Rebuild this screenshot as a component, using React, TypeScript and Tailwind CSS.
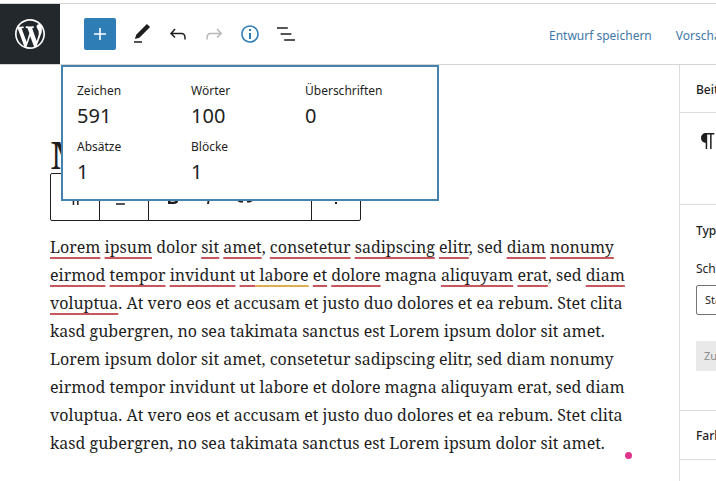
import type { ReactNode } from "react";

const icons = {
  logo: "M20 10c0-5.51-4.49-10-10-10C4.48 0 0 4.49 0 10c0 5.52 4.48 10 10 10 5.51 0 10-4.48 10-10zM7.78 15.37L4.37 6.22c.55-.02 1.17-.08 1.17-.08.5-.06.44-1.13-.06-1.11 0 0-1.45.11-2.37.11-.18 0-.37 0-.58-.01C4.12 2.69 6.87 1.11 10 1.11c2.33 0 4.45.87 6.05 2.34-.68-.11-1.65.39-1.65 1.58 0 .74.45 1.36.9 2.1.35.61.55 1.36.55 2.46 0 1.49-1.4 5-1.4 5l-3.03-8.37c.54-.02.82-.17.82-.17.5-.05.44-1.25-.06-1.22 0 0-1.44.12-2.38.12-.87 0-2.33-.12-2.33-.12-.5-.03-.56 1.2-.06 1.22l.92.08 1.26 3.41zM17.41 10c.24-.64.74-1.87.43-4.25.7 1.29 1.05 2.71 1.05 4.25 0 3.29-1.73 6.24-4.4 7.78.97-2.59 1.94-5.2 2.92-7.78zM6.1 18.09C3.12 16.65 1.11 13.53 1.11 10c0-1.3.23-2.48.72-3.59C3.25 10.3 4.67 14.2 6.1 18.09zm4.03-6.63l2.58 6.98c-.86.29-1.76.45-2.71.45-.79 0-1.57-.11-2.29-.33.81-2.38 1.62-4.74 2.42-7.1z",
  plus: "M18 11.2h-5.2V6h-1.6v5.2H6v1.6h5.2V18h1.6v-5.2H18z",
  edit: "M20.1 5.1L16.9 2 6.2 12.7l-1.3 4.4 4.5-1.3L20.1 5.1zM4 20.8h8v-1.5H4v1.5z",
  undo: "M18.3 11.7c-.6-.6-1.4-.9-2.3-.9H6.7l2.9-3.3-1.1-1-4.5 5L8.5 16l1-1-2.7-2.7H16c.5 0 .9.2 1.3.5 1 1 1 3.4 1 4.5v.3h1.5v-.2c0-1.5 0-4.3-1.5-5.7z",
  redo: "M15.6 6.5l-1.1 1 2.9 3.3H8c-.9 0-1.7.3-2.3.9-1.4 1.5-1.4 4.2-1.4 5.6v.2h1.5v-.3c0-1.1 0-3.5 1-4.5.3-.3.7-.5 1.3-.5h9.2L14.5 15l1.1 1.1 4.6-4.6-4.6-5z",
  info: "M12 3.2c-4.8 0-8.8 3.9-8.8 8.8 0 4.8 3.9 8.8 8.8 8.8 4.8 0 8.8-3.9 8.8-8.8 0-4.8-4-8.8-8.8-8.8zm0 16c-4 0-7.2-3.3-7.2-7.2C4.8 8 8 4.8 12 4.8s7.2 3.3 7.2 7.2c0 4-3.2 7.2-7.2 7.2zM11 17h2v-6h-2v6zm0-8h2V7h-2v2z",
  outline: "M13.8 5.2H3v1.5h10.8V5.2zm-3.6 12v1.5H21v-1.5H10.2zm7.2-6H6.6v1.5h10.8v-1.5z",
  paragraph: "M18.3 4H9.9v-.1l-.9.2c-2.3.4-4 2.4-4 4.8s1.7 4.4 4 4.8l.7.1V20h1.5V5.5h2.9V20h1.5V5.5h2.7V4z",
  align: "M4 19.8h8.9v-1.5H4v1.5zm8.9-15.6H4v1.5h8.9V4.2zm-8.9 7v1.5h16v-1.5H4z",
  bold: "M14.7 11.3c1-.6 1.5-1.6 1.5-3 0-2.3-1.3-3.4-4-3.4H7v14h5.8c1.4 0 2.5-.3 3.3-1 .8-.7 1.2-1.7 1.2-2.9.1-1.9-.8-3.1-2.6-3.7zm-5.1-4h2.3c.6 0 1.1.1 1.4.4.3.3.5.7.5 1.2s-.2 1-.5 1.2c-.3.3-.8.4-1.4.4H9.6V7.3zm4.6 9c-.4.3-1 .4-1.7.4H9.6v-3.9h2.9c.7 0 1.3.2 1.7.5.4.3.6.8.6 1.5s-.2 1.2-.6 1.5z",
  italic: "M12.5 5L10 19h1.9l2.5-14z",
  link: "M15.6 7.2H14v1.5h1.6c2 0 3.7 1.7 3.7 3.7s-1.7 3.7-3.7 3.7H14v1.5h1.6c2.8 0 5.2-2.3 5.2-5.2 0-2.9-2.3-5.2-5.2-5.2zM4.7 12.4c0-2 1.7-3.7 3.7-3.7H10V7.2H8.4c-2.9 0-5.2 2.3-5.2 5.2 0 2.9 2.3 5.2 5.2 5.2H10v-1.5H8.4c-2 0-3.7-1.7-3.7-3.7zm4.6.9h5.3v-1.5H9.3v1.5z",
  more: "M13 19h-2v-2h2v2zm0-6h-2v-2h2v2zm0-6h-2V5h2v2z",
};

function Icon({ name }: { name: keyof typeof icons }) {
  return (
    <svg viewBox="0 0 24 24" className="size-6 shrink-0 fill-current" aria-hidden="true">
      <path d={icons[name]} />
    </svg>
  );
}

function IconButton({ name, label, className = "" }: { name: keyof typeof icons; label: string; className?: string }) {
  return (
    <button type="button" aria-label={label} className={`flex h-9 w-9 shrink-0 items-center justify-center ${className}`}>
      <Icon name={name} />
    </button>
  );
}

function Spell({ children }: { children: ReactNode }) {
  return (
    <span className="underline decoration-[#c8565c] decoration-2 underline-offset-4 [text-decoration-skip-ink:none]">
      {children}
    </span>
  );
}

function Hint({ children }: { children: ReactNode }) {
  return (
    <span className="underline decoration-[#e0ad52] decoration-2 underline-offset-4 [text-decoration-skip-ink:none]">
      {children}
    </span>
  );
}

const stats = [
  ["Zeichen", "591"],
  ["Wörter", "100"],
  ["Überschriften", "0"],
  ["Absätze", "1"],
  ["Blöcke", "1"],
];

function StatsPopover() {
  return (
    <dl className="absolute top-[65px] left-[61px] grid w-[378px] grid-cols-[114px_114px_114px] gap-y-1 border-2 border-[#4682ae] bg-white px-3.5 pt-3.5 pb-2.5">
      {stats.map(([label, value]) => (
        <div key={label} className="h-[52px]">
          <dt className="text-[12px] leading-5">{label}</dt>
          <dd className="text-[20px] leading-[30px]">{value}</dd>
        </div>
      ))}
    </dl>
  );
}

function Header() {
  return (
    <header className="mt-[3px] flex h-[62px] items-center border-y border-[#d5d5d8] bg-white">
      <a href="#" aria-label="WordPress" className="flex size-[60px] shrink-0 items-center justify-center bg-[#23282d] text-white">
        <svg viewBox="-2 -2 24 24" className="size-9 fill-current" aria-hidden="true">
          <path d={icons.logo} />
        </svg>
      </a>
      <button type="button" aria-label="Block hinzufügen" className="mr-2 ml-6 flex size-8 shrink-0 items-center justify-center rounded-xs bg-[#2f7db5] text-white">
        <Icon name="plus" />
      </button>
      <IconButton name="edit" label="Werkzeuge" />
      <IconButton name="undo" label="Rückgängig" />
      <IconButton name="redo" label="Wiederholen" className="text-[#b8b8b8]" />
      <IconButton name="info" label="Details" className="text-[#2f7db5]" />
      <IconButton name="outline" label="Gliederung" />
      <div className="ml-auto flex w-[167px] shrink-0 gap-6 overflow-hidden pt-1 text-[12px] whitespace-nowrap text-[#4078a8]">
        <button type="button">Entwurf speichern</button>
        <button type="button">Vorschau</button>
      </div>
    </header>
  );
}

function BlockToolbar() {
  return (
    <div className="flex h-12 w-[311px] rounded-xs border border-[#1e1e1e] bg-white">
      <div className="flex w-[49px] items-center justify-center border-r border-[#1e1e1e]">
        <IconButton name="paragraph" label="Absatz" />
      </div>
      <div className="flex w-[49px] items-center justify-center border-r border-[#1e1e1e]">
        <IconButton name="align" label="Ausrichtung" />
      </div>
      <div className="flex flex-1 items-center border-r border-[#1e1e1e] pl-1.5">
        <IconButton name="bold" label="Fett" />
        <IconButton name="italic" label="Kursiv" />
        <IconButton name="link" label="Link" />
      </div>
      <div className="flex w-[48px] items-center justify-center">
        <IconButton name="more" label="Optionen" />
      </div>
    </div>
  );
}

function Editor() {
  return (
    <main className="min-w-0 flex-1 pt-[66px] pl-[50px] font-['Noto_Serif','DejaVu_Serif_Condensed','DejaVu_Serif',serif]">
      <h1 className="h-[42px] text-[38px] leading-[46px]">M</h1>
      <BlockToolbar />
      <p className="mt-3 text-[16px] leading-7 whitespace-nowrap">
        <Spell>Lorem</Spell> <Spell>ipsum</Spell> dolor <Spell>sit</Spell> <Spell>amet</Spell>, <Spell>consetetur</Spell>{" "}
        <Spell>sadipscing</Spell> <Spell>elitr</Spell>, sed <Spell>diam</Spell> <Spell>nonumy</Spell>
        <br />
        <Spell>eirmod</Spell> <Spell>tempor</Spell> <Spell>invidunt</Spell> <Spell>ut</Spell>
        <Hint> labore</Hint> <Spell>et</Spell> <Spell>dolore</Spell> magna <Spell>aliquyam</Spell> <Spell>erat</Spell>, sed{" "}
        <Spell>diam</Spell>
        <br />
        <Spell>voluptua</Spell>. At vero eos et accusam et justo duo dolores et ea rebum. Stet clita
        <br />
        kasd gubergren, no sea takimata sanctus est Lorem ipsum dolor sit amet.
        <br />
        Lorem ipsum dolor sit amet, consetetur sadipscing elitr, sed diam nonumy
        <br />
        eirmod tempor invidunt ut labore et dolore magna aliquyam erat, sed diam
        <br />
        voluptua. At vero eos et accusam et justo duo dolores et ea rebum. Stet clita
        <br />
        kasd gubergren, no sea takimata sanctus est Lorem ipsum dolor sit amet.
      </p>
    </main>
  );
}

function Sidebar() {
  return (
    <aside className="w-[37px] shrink-0 overflow-hidden border-l border-[#dcdcde] text-[12px] whitespace-nowrap">
      <div className="flex h-12 items-center border-b border-[#dcdcde] pt-0.5 pl-4 font-medium">Beitrag</div>
      <div className="h-[92px] border-b border-[#dcdcde] pt-4 pl-4">
        <Icon name="paragraph" />
      </div>
      <section className="h-[206px] border-b border-[#dcdcde] pt-4 pl-4">
        <h2 className="leading-5 font-medium">Typografie</h2>
        <label htmlFor="size" className="mt-[18px] block leading-5">
          Schriftgröße
        </label>
        <select id="size" className="mt-1.5 block h-[30px] w-[120px] appearance-none rounded-xs border border-[#757575] bg-white pl-2 text-[11px]">
          <option>Standard</option>
        </select>
        <button type="button" disabled className="mt-[26px] flex h-[30px] w-[120px] items-center bg-[#e9e9e9] pl-2 text-[11px] text-[#8c8c8c]">
          Zurücksetzen
        </button>
      </section>
      <h2 className="flex h-[49px] items-center border-b border-[#dcdcde] pt-0.5 pl-4 font-medium">Farbe</h2>
    </aside>
  );
}

export default function App() {
  return (
    <div className="relative flex min-h-screen flex-col overflow-hidden bg-white font-['Noto_Sans',sans-serif] text-[#1e1e1e]">
      <Header />
      <div className="flex flex-1">
        <Editor />
        <Sidebar />
      </div>
      <StatsPopover />
      <span className="absolute top-[452px] left-[625px] size-[7px] rounded-full bg-[#e0338b]" />
    </div>
  );
}
